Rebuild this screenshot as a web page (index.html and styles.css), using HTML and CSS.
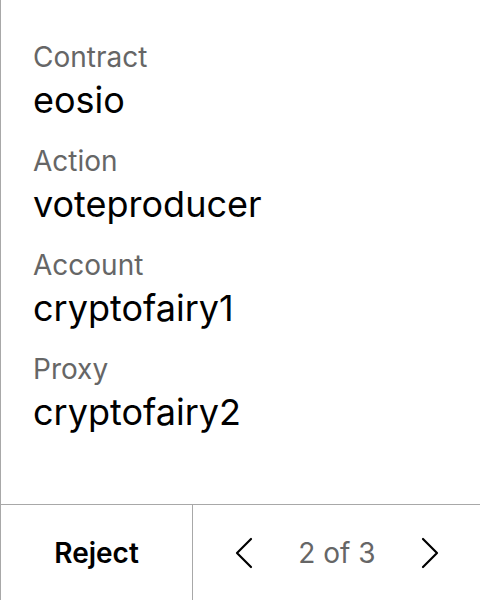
FILE: index.html
```html
<!DOCTYPE html>
<html>
<head>
<meta charset="utf-8">
<link rel="stylesheet" href="styles.css">
</head>
<body>
<div class="screen">
  <div class="fields">
    <div class="field"><div class="label">Contract</div><div class="value">eosio</div></div>
    <div class="field"><div class="label">Action</div><div class="value">voteproducer</div></div>
    <div class="field"><div class="label">Account</div><div class="value">cryptofairy1</div></div>
    <div class="field"><div class="label">Proxy</div><div class="value">cryptofairy2</div></div>
  </div>
  <div class="footer">
    <div class="reject">Reject</div>
    <div class="pager">
      <svg class="chev" width="20" height="32" viewBox="0 0 20 32"><path d="M17 2 L3 16 L17 30" fill="none" stroke="#000" stroke-width="2.2" stroke-linecap="round" stroke-linejoin="round"/></svg>
      <span class="count">2 of 3</span>
      <svg class="chev" width="20" height="32" viewBox="0 0 20 32"><path d="M3 2 L17 16 L3 30" fill="none" stroke="#000" stroke-width="2.2" stroke-linecap="round" stroke-linejoin="round"/></svg>
    </div>
  </div>
</div>
</body>
</html>
```
FILE: styles.css
```css
html, body { margin: 0; padding: 0; background: #fff; }
body { font-family: Inter, "Noto Sans", sans-serif; }
.screen {
  width: 480px; height: 600px; box-sizing: border-box;
  border-left: 1px solid #a8a8a8;
  display: flex; flex-direction: column;
}
.fields {
  flex: 1; padding: 40px 0 0 32px;
  display: flex; flex-direction: column;
}
.field { height: 104px; }
.label { font-size: 28px; line-height: 34px; color: #666; }
.value { font-size: 36px; line-height: 52px; color: #000; font-weight: 400; }
.footer {
  height: 95px; border-top: 1px solid #a8a8a8;
  display: flex;
}
.reject {
  width: 191px; border-right: 1px solid #a8a8a8;
  display: flex; align-items: center; justify-content: center;
  font-size: 28px; font-weight: 600; color: #000;
}
.pager {
  flex: 1; display: flex; align-items: center; justify-content: space-between;
  padding: 0 40px 0 41px;
}
.count { font-size: 28px; color: #666; }
```
